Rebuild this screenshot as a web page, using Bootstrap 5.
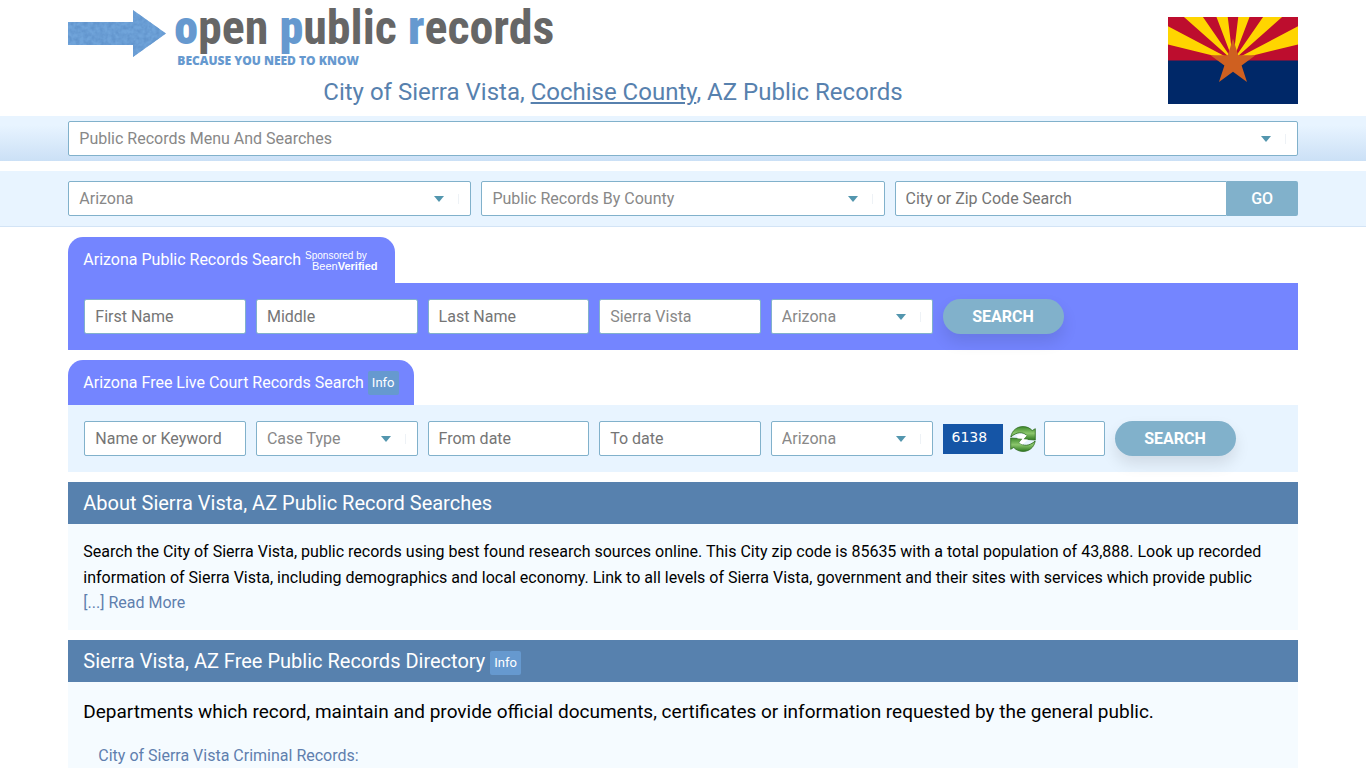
<!DOCTYPE html>
<html lang="en">
<head>
<meta charset="utf-8">
<meta name="viewport" content="width=device-width, initial-scale=1">
<title>City of Sierra Vista, AZ Public Records</title>
<link href="https://cdn.jsdelivr.net/npm/bootstrap@5.3.0/dist/css/bootstrap.min.css" rel="stylesheet">
<style>
body{font-family:Roboto,"Liberation Sans",sans-serif;font-size:16px;line-height:24px;color:#000;background:#fff;overflow-x:hidden}
.wrap{width:90%;margin-inline:auto}
a{color:#5f7fae}
.top{padding-bottom:6px}
.logo-row{gap:8px;height:74px;padding-top:4px}
.logo-arrow{margin-top:6px;flex:none}
.logo-name{font-family:"Liberation Sans Narrow","Roboto Condensed","Liberation Sans",sans-serif;font-weight:700;font-size:48px;line-height:48px;color:#666;white-space:nowrap}
.logo-name b{color:#6699cf}
.logo-tag{font-family:"Open Sans",sans-serif;font-weight:800;font-size:12px;line-height:18px;color:#6699cf;padding-left:3px}
.page-title{font-size:24px;line-height:36px;font-weight:400;color:#5781ae}
.page-title a{color:inherit}
.flag{width:130px;margin-top:17px}
.menu-band{background:linear-gradient(#e8f4ff 20%,#cbe0f6);padding:5px 0}
.place-band{background:#e8f4ff;border-bottom:1px solid #d3e4f6;padding:10px 0;margin-top:10px}
.thirds{grid-template-columns:repeat(3,minmax(0,1fr))}
.gap-10{gap:10px}
.field,.field:focus{height:35px;padding:0 10px;border:1px solid #81b1cb;border-radius:2px;background-color:#fff;color:#888;font-size:16px;line-height:24px;box-shadow:none}
.field::placeholder{color:#757575;opacity:1}
select.field{appearance:none;background-image:url("data:image/svg+xml,%3Csvg xmlns='http://www.w3.org/2000/svg' width='26' height='12'%3E%3Cpath d='M0 3h10L5 9z' fill='%235396ae'/%3E%3Cpath d='M24.500 1v10' stroke='%23eef2f6'/%3E%3C/svg%3E");background-repeat:no-repeat;background-position:right 10px center;background-size:26px 12px}
.btn-go{width:71px;height:35px;padding:0;border:0;border-radius:0 2px 2px 0;background:#81b1cb;color:#fff;font-weight:500}
.btn-search{width:121px;height:35px;padding:0;border:0;border-radius:18px;background:#81b1cb;color:#fff;font-weight:700;box-shadow:0 8px 15px rgba(0,0,0,.1)}
.btn-go:hover,.btn-search:hover{background:#6da2be;color:#fff}
.tab-title{background:#7485ff;color:#fff;border-radius:15px 15px 0 0;padding:0 15px;height:46px;width:fit-content;font-size:16px;font-weight:400;margin:10px 0 0;gap:4px}
.tab-title.court{height:45px}
.sponsor{font-family:"Liberation Sans",sans-serif;font-size:10px;line-height:10px;font-weight:400;padding-top:3px;width:75px}
.sponsor-name{padding-left:7px;font-size:11px}
.search-panel{padding:16px;background:#e8f4ff}
.search-panel.violet{background:#7485ff}
.slot{flex:0 0 13.5%;min-width:0}
.code-field{width:61px}
.captcha{width:60px;height:30px;background:#1555a6;color:#fff;font-family:"DejaVu Sans",sans-serif;font-size:14px;line-height:27px;padding-left:9px}
.refresh{width:27px;margin:0 -3px;border:0;background:none;padding:0;line-height:0}
.info-btn{background:#6699cf;color:#fff;border:0;border-radius:2px;font-size:13px;line-height:24px;padding:0 4px;font-weight:400}
.bar{background:#5781ae;color:#fff;font-size:20px;line-height:42px;font-weight:400;padding:0 15px;margin:10px 0 0;gap:5px}
.panel-body{background:#f5fbff;padding:15px}
.about p{line-height:26px;margin:0}
.about{min-height:106px}
.lead-in{font-size:19px;line-height:30px;margin:0 0 17px}
.topics{padding:0 15px}
a.plain{text-decoration:none}
</style>
</head>
<body>
<header class="wrap top d-flex align-items-start gap-10">
  <div class="flex-grow-1">
    <div class="logo-row d-flex">
      <svg class="logo-arrow" width="98" height="48" viewBox="0 0 98 48" aria-hidden="true">
        <filter id="grain" x="0" y="0" width="100%" height="100%" color-interpolation-filters="sRGB"><feTurbulence type="fractalNoise" baseFrequency=".25" numOctaves="3" seed="4"/><feColorMatrix values="0 0 0 0 .38  0 0 0 0 .58  0 0 0 0 .8  2 0 0 0 -.6"/><feComposite in2="SourceGraphic" operator="in" result="n"/><feMerge><feMergeNode in="SourceGraphic"/><feMergeNode in="n"/></feMerge></filter>
        <path filter="url(#grain)" d="M0 12H65V0L98 23.500 65 47V35H0z" fill="#70a4da"/>
      </svg>
      <div>
        <div class="logo-name"><b>o</b>pen <b>p</b>ublic <b>r</b>ecords</div>
        <div class="logo-tag">BECAUSE YOU NEED TO KNOW</div>
      </div>
    </div>
    <h1 class="page-title text-center mb-0">City of Sierra Vista, <a href="#">Cochise County</a>, AZ Public Records</h1>
  </div>
  <svg class="flag flex-shrink-0" viewBox="0 0 130 87" role="img" aria-label="Arizona flag">
    <path fill="#bd0d2e" d="M0 0h130v44H0z"/>
    <g transform="translate(65 43.500)" fill="#ffd500">
      <path d="M0 0L194-48 177-93zM0 0L150-133 114-165zM0 0L71-187 24-199zM0 0L-194-48-177-93zM0 0L-150-133-114-165zM0 0L-71-187-24-199z"/>
    </g>
    <path fill="#002868" d="M0 43.500h130V87H0z"/>
    <path fill="#cf6020" d="M65 21.500L70.200 38.300H87.500L73.600 48.500 79 65 65 54.800 51 65 56.400 48.500 42.500 38.300H59.800z"/>
  </svg>
</header>

<nav class="menu-band" aria-label="Records menu">
  <div class="wrap">
    <select class="field form-select" aria-label="Public records menu"><option>Public Records Menu And Searches</option></select>
  </div>
</nav>

<form class="place-band">
  <div class="wrap d-grid thirds gap-10">
    <select class="field form-select" aria-label="State"><option>Arizona</option></select>
    <select class="field form-select" aria-label="County"><option>Public Records By County</option></select>
    <div class="d-flex">
      <input class="field form-control rounded-end-0" type="text" placeholder="City or Zip Code Search" aria-label="City or zip code">
      <button class="btn btn-go flex-shrink-0" type="button">GO</button>
    </div>
  </div>
</form>

<main class="wrap">
  <section>
    <h2 class="tab-title d-flex align-items-center">Arizona Public Records Search
      <span class="sponsor text-nowrap">Sponsored by<br><span class="sponsor-name">Been<strong>Verified</strong></span></span></h2>
    <form class="search-panel violet d-flex gap-10">
      <div class="slot"><input class="field form-control" placeholder="First Name" aria-label="First name"></div>
      <div class="slot"><input class="field form-control" placeholder="Middle" aria-label="Middle name"></div>
      <div class="slot"><input class="field form-control" placeholder="Last Name" aria-label="Last name"></div>
      <div class="slot"><input class="field form-control" value="Sierra Vista" aria-label="City"></div>
      <div class="slot"><select class="field form-select" aria-label="State"><option>Arizona</option></select></div>
      <button class="btn btn-search" type="button">SEARCH</button>
    </form>
  </section>

  <section>
    <h2 class="tab-title court d-flex align-items-center">Arizona Free Live Court Records Search
      <button class="info-btn" type="button">Info</button></h2>
    <form class="search-panel d-flex gap-10 align-items-center">
      <div class="slot"><input class="field form-control" placeholder="Name or Keyword" aria-label="Name or keyword"></div>
      <div class="slot"><select class="field form-select" aria-label="Case type"><option>Case Type</option></select></div>
      <div class="slot"><input class="field form-control" placeholder="From date" aria-label="From date"></div>
      <div class="slot"><input class="field form-control" placeholder="To date" aria-label="To date"></div>
      <div class="slot"><select class="field form-select" aria-label="Court state"><option>Arizona</option></select></div>
      <div class="captcha flex-shrink-0">6138</div>
      <button class="refresh flex-shrink-0" type="button" aria-label="New code">
        <svg width="26" height="26" viewBox="0 0 26 26">
          <defs><linearGradient id="leaf" x2="0" y2="1"><stop stop-color="#3f8a2c"/><stop offset=".5" stop-color="#8cc66d"/><stop offset="1" stop-color="#2f7a20"/></linearGradient></defs>
          <g fill="url(#leaf)" stroke="#2d6b20" stroke-width=".8" stroke-linejoin="round">
            <path d="M.8 11C2 4 7.500 .5 13 .6c4 0 7 1.500 9.200 4L25.300 2.700V14L13.500 13.200 16.800 9.600C12.500 5.200 6.500 6 .8 11z"/>
            <path d="M25.200 15C24 22 18.500 25.500 13 25.400c-4 0-7-1.500-9.200-4L.7 23.300V12L12.500 12.800 9.200 16.400C13.500 20.800 19.500 20 25.200 15z"/>
          </g>
          <path d="M7 9.500C10 7.500 13.500 7.800 16.800 9.600L13.500 13.200 18 13.600 12.500 18.600C11 18 10 17.300 9.200 16.400L12.500 12.800 7.500 12.400z" fill="#fff"/>
        </svg>
      </button>
      <input class="field form-control code-field flex-shrink-0" aria-label="Enter the code">
      <button class="btn btn-search" type="button">SEARCH</button>
    </form>
  </section>

  <section>
    <h2 class="bar">About Sierra Vista, AZ Public Record Searches</h2>
    <div class="panel-body about">
      <p>Search the City of Sierra Vista, public records using best found research sources online. This City zip code is 85635 with a total population of 43,888. Look up recorded information of Sierra Vista, including demographics and local economy. Link to all levels of Sierra Vista, government and their sites with services which provide public</p>
      <a class="plain d-block" href="#">[...] Read More</a>
    </div>
  </section>

  <section>
    <h2 class="bar d-flex align-items-center">Sierra Vista, AZ Free Public Records Directory
      <button class="info-btn mt-1" type="button">Info</button></h2>
    <div class="panel-body">
      <p class="lead-in">Departments which record, maintain and provide official documents, certificates or information requested by the general public.</p>
      <div class="topics"><a class="plain" href="#">City of Sierra Vista Criminal Records:</a></div>
    </div>
  </section>
</main>
<script src="https://cdn.jsdelivr.net/npm/bootstrap@5.3.0/dist/js/bootstrap.bundle.min.js"></script>
</body>
</html>
